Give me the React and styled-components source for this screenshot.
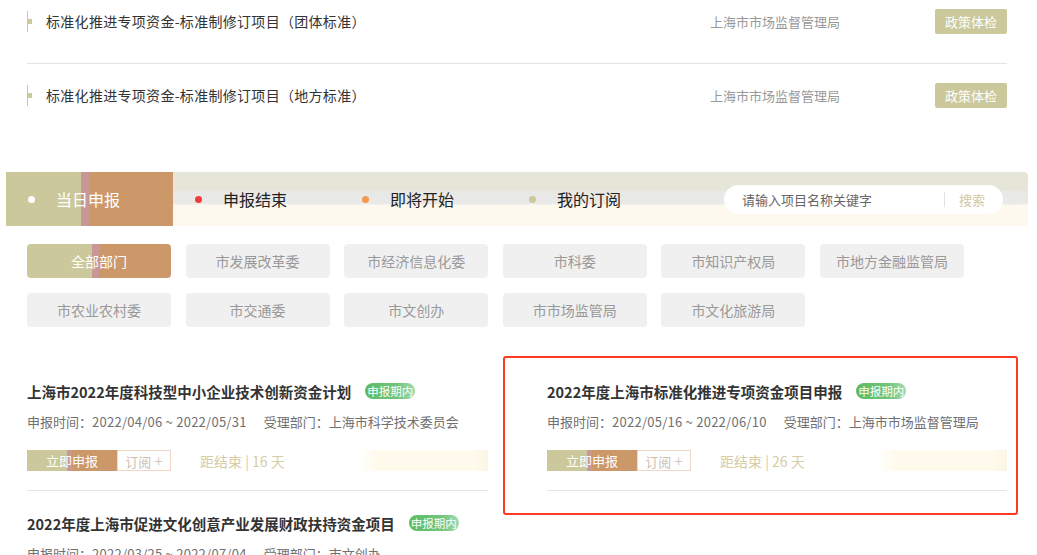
import React from "react";
import styled, { createGlobalStyle } from "styled-components";

const Global = createGlobalStyle`
  html, body { margin: 0; padding: 0; background: #fff; }
  body {
    font-family: "Noto Sans CJK SC", "Noto Sans", "Liberation Sans", sans-serif;
    color: #333;
    overflow: hidden;
  }
  * { box-sizing: border-box; }
`;

const OLIVE = "#cbc99b";
const ORANGE = "#cc9869";
const PINK = "#c99797";
const splitGradient = `linear-gradient(90deg, ${OLIVE} 0%, ${OLIVE} 45%, ${PINK} 45%, ${PINK} 50%, ${ORANGE} 50%, ${ORANGE} 100%)`;

const Page = styled.div`
  width: 1022px;
  margin: -10px 6px 0;
`;

const PolicyList = styled.div`
  padding: 0 21px;
`;

const PolicyRow = styled.div`
  display: flex;
  align-items: center;
  height: 74px;
  padding: 19px 0 30px;
  border-bottom: ${(p) => (p.$last ? "none" : "1px solid #e3e3e3")};
`;

const PolicyTitle = styled.div`
  position: relative;
  flex: 1;
  height: 21px;
  line-height: 21px;
  padding-left: 18px;
  border-left: 1px solid ${OLIVE};
  font-size: 14px;
  letter-spacing: 0.3px;
  color: #333;
  &::before {
    content: "";
    position: absolute;
    left: 0;
    top: 8px;
    width: 4px;
    height: 5px;
    background: ${OLIVE};
  }
`;

const PolicyAgency = styled.div`
  width: 225px;
  font-size: 13px;
  color: #999;
`;

const CheckButton = styled.div`
  width: 72px;
  height: 25px;
  line-height: 25px;
  text-align: center;
  font-size: 13px;
  color: #fff;
  background: ${OLIVE};
  border-radius: 2px;
`;

const TabBar = styled.div`
  margin-top: 34px;
  height: 54px;
  display: flex;
  align-items: stretch;
  border-radius: 0 4px 4px 0;
  background: linear-gradient(
    180deg,
    #e6e6d8 0%,
    #e6e6d8 34%,
    #e8e8e4 36%,
    #e9e9e9 58%,
    #fdf9ef 62%,
    #fdf9ef 100%
  );
`;

const Tab = styled.div`
  width: 167px;
  display: flex;
  align-items: center;
  padding-left: 22px;
  font-size: 16px;
  color: ${(p) => (p.$active ? "#fff" : "#222")};
  background: ${(p) => (p.$active ? splitGradient : "transparent")};
`;

const Dot = styled.span`
  width: 7px;
  height: 7px;
  border-radius: 50%;
  background: ${(p) => p.$color};
  margin-right: 21px;
`;

const SearchBox = styled.div`
  margin: 13px 0 0 50px;
  width: 279px;
  height: 29px;
  border-radius: 15px;
  background: #fff;
  display: flex;
  align-items: center;
  padding: 0 18px;
  font-size: 13px;
`;

const Placeholder = styled.span`
  flex: 1;
  color: #666;
`;

const SearchSep = styled.span`
  width: 1px;
  height: 15px;
  background: #e2e2e2;
  margin-right: 14px;
`;

const SearchBtn = styled.span`
  color: #d3c7a3;
`;

const DeptGrid = styled.div`
  margin: 18px 21px 0;
  display: grid;
  grid-template-columns: repeat(6, 144px);
  column-gap: 14.6px;
  row-gap: 15px;
`;

const DeptButton = styled.div`
  height: 34px;
  line-height: 34px;
  text-align: center;
  font-size: 14px;
  border-radius: 4px;
  color: ${(p) => (p.$active ? "#fff" : "#999")};
  background: ${(p) => (p.$active ? splitGradient : "#f0f0f0")};
`;

const CardGrid = styled.div`
  margin: 32px 21px 0;
  display: grid;
  grid-template-columns: 461px 460px;
  column-gap: 59px;
`;

const Card = styled.div`
  position: relative;
  padding: 22px 0 19px;
  border-bottom: 1px solid #e3e3e3;
  &::after {
    content: ${(p) => (p.$marked ? '""' : "none")};
    position: absolute;
    left: -44px;
    top: -3px;
    right: -11px;
    bottom: -25px;
    border: 2px solid #ff3a22;
    border-radius: 3px;
    pointer-events: none;
  }
`;

const CardTitleRow = styled.div`
  display: flex;
  align-items: center;
  height: 20px;
`;

const CardTitle = styled.div`
  font-size: 14.5px;
  font-weight: 700;
  color: #333;
  white-space: nowrap;
`;

const Badge = styled.span`
  margin-left: 14px;
  height: 16px;
  line-height: 16px;
  padding: 0 2px;
  border-radius: 8px;
  font-size: 11.5px;
  color: #fff;
  background: linear-gradient(90deg, #5dbb63 0%, #71c57b 65%, #a3dab0 100%);
`;

const CardInfo = styled.div`
  margin-top: 11px;
  height: 20px;
  line-height: 20px;
  font-size: 13px;
  color: #707070;
  white-space: nowrap;
  span + span { margin-left: 17px; }
`;

const Digits = styled.span`
  letter-spacing: 0.25px;
`;

const Actions = styled.div`
  margin-top: 18px;
  height: 21px;
  display: flex;
  align-items: center;
  background: linear-gradient(
    90deg,
    rgba(255, 250, 235, 0) 72%,
    #fffaeb 76%,
    #fffaeb 97%,
    #fbf5e6 100%
  );
`;

const ApplyButton = styled.div`
  width: 90px;
  height: 21px;
  line-height: 21px;
  text-align: center;
  font-size: 13px;
  color: #fff;
  background: ${splitGradient};
`;

const SubscribeButton = styled.div`
  width: 54px;
  height: 21px;
  line-height: 19px;
  text-align: center;
  font-size: 13px;
  color: #c9c0b4;
  background: #fff;
  border: 1px solid #f0d6c6;
`;

const Plus = styled.span`
  font-size: 16px;
  font-weight: 300;
  margin-left: 3px;
`;

const Countdown = styled.div`
  margin-left: 29px;
  font-size: 14px;
  color: #d6cca6;
`;

const policies = [
  "标准化推进专项资金-标准制修订项目（团体标准）",
  "标准化推进专项资金-标准制修订项目（地方标准）",
];

const tabs = [
  { label: "当日申报", color: "#fff", active: true },
  { label: "申报结束", color: "#f53a3a" },
  { label: "即将开始", color: "#f5994c" },
  { label: "我的订阅", color: OLIVE },
];

const depts = [
  "全部部门", "市发展改革委", "市经济信息化委", "市科委", "市知识产权局", "市地方金融监管局",
  "市农业农村委", "市交通委", "市文创办", "市市场监管局", "市文化旅游局",
];

const projects = [
  {
    title: "上海市2022年度科技型中小企业技术创新资金计划",
    time: "2022/04/06 ~ 2022/05/31",
    dept: "上海市科学技术委员会",
    days: 16,
  },
  {
    title: "2022年度上海市标准化推进专项资金项目申报",
    time: "2022/05/16 ~ 2022/06/10",
    dept: "上海市市场监督管理局",
    days: 26,
    marked: true,
  },
  {
    title: "2022年度上海市促进文化创意产业发展财政扶持资金项目",
    time: "2022/03/25 ~ 2022/07/04",
    dept: "市文创办",
    days: 40,
  },
];

export default function App() {
  return (
    <>
      <Global />
      <Page>
        <PolicyList>
          {policies.map((t, i) => (
            <PolicyRow key={t} $last={i === policies.length - 1}>
              <PolicyTitle>{t}</PolicyTitle>
              <PolicyAgency>上海市市场监督管理局</PolicyAgency>
              <CheckButton>政策体检</CheckButton>
            </PolicyRow>
          ))}
        </PolicyList>

        <TabBar>
          {tabs.map((t) => (
            <Tab key={t.label} $active={t.active}>
              <Dot $color={t.color} />
              {t.label}
            </Tab>
          ))}
          <SearchBox>
            <Placeholder>请输入项目名称关键字</Placeholder>
            <SearchSep />
            <SearchBtn>搜索</SearchBtn>
          </SearchBox>
        </TabBar>

        <DeptGrid>
          {depts.map((d, i) => (
            <DeptButton key={d} $active={i === 0}>{d}</DeptButton>
          ))}
        </DeptGrid>

        <CardGrid>
          {projects.map((p) => (
            <Card key={p.title} $marked={p.marked}>
              <CardTitleRow>
                <CardTitle>{p.title}</CardTitle>
                <Badge>申报期内</Badge>
              </CardTitleRow>
              <CardInfo>
                <span>申报时间：<Digits>{p.time}</Digits></span>
                <span>受理部门：{p.dept}</span>
              </CardInfo>
              <Actions>
                <ApplyButton>立即申报</ApplyButton>
                <SubscribeButton>订阅<Plus>+</Plus></SubscribeButton>
                <Countdown>距结束 | {p.days} 天</Countdown>
              </Actions>
            </Card>
          ))}
        </CardGrid>
      </Page>
    </>
  );
}
